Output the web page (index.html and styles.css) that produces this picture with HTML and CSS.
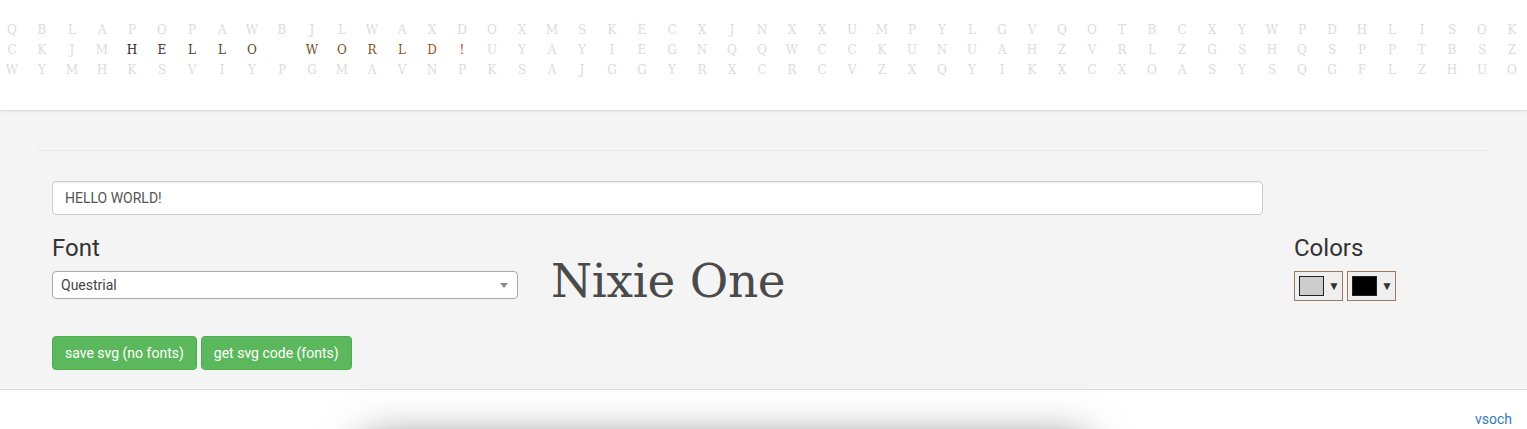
FILE: index.html
```html
<!DOCTYPE html>
<html lang="en">
<head>
<meta charset="utf-8">
<title>Nixie One</title>
<link rel="stylesheet" href="styles.css">
</head>
<body>
<header class="banner">
  <div class="grid-letters">
    <div class="lrow"><span>Q</span><span>B</span><span>L</span><span>A</span><span>P</span><span>O</span><span>P</span><span>A</span><span>W</span><span>B</span><span>J</span><span>L</span><span>W</span><span>A</span><span>X</span><span>D</span><span>O</span><span>X</span><span>M</span><span>S</span><span>K</span><span>E</span><span>C</span><span>X</span><span>J</span><span>N</span><span>X</span><span>X</span><span>U</span><span>M</span><span>P</span><span>Y</span><span>L</span><span>G</span><span>V</span><span>Q</span><span>O</span><span>T</span><span>B</span><span>C</span><span>X</span><span>Y</span><span>W</span><span>P</span><span>D</span><span>H</span><span>L</span><span>I</span><span>S</span><span>O</span><span>K</span></div>
    <div class="lrow"><span>C</span><span>K</span><span>J</span><span>M</span><span class="h1c">H</span><span class="h2c">E</span><span class="h3c">L</span><span class="h4c">L</span><span class="h5c">O</span><span></span><span class="h6c">W</span><span class="h7c">O</span><span class="h8c">R</span><span class="h9c">L</span><span class="h10c">D</span><span class="h11c">!</span><span>U</span><span>Y</span><span>A</span><span>Y</span><span>I</span><span>E</span><span>G</span><span>N</span><span>Q</span><span>Q</span><span>W</span><span>C</span><span>C</span><span>K</span><span>U</span><span>N</span><span>U</span><span>A</span><span>H</span><span>Z</span><span>V</span><span>R</span><span>L</span><span>Z</span><span>G</span><span>S</span><span>H</span><span>Q</span><span>S</span><span>P</span><span>P</span><span>T</span><span>B</span><span>S</span><span>Z</span></div>
    <div class="lrow"><span>W</span><span>Y</span><span>M</span><span>H</span><span>K</span><span>S</span><span>V</span><span>I</span><span>Y</span><span>P</span><span>G</span><span>M</span><span>A</span><span>V</span><span>N</span><span>P</span><span>K</span><span>S</span><span>A</span><span>J</span><span>G</span><span>G</span><span>Y</span><span>R</span><span>X</span><span>C</span><span>R</span><span>C</span><span>V</span><span>Z</span><span>X</span><span>Q</span><span>Y</span><span>I</span><span>K</span><span>X</span><span>C</span><span>X</span><span>O</span><span>A</span><span>S</span><span>Y</span><span>S</span><span>Q</span><span>G</span><span>F</span><span>L</span><span>Z</span><span>H</span><span>U</span><span>O</span></div>
  </div>
</header>

<main class="panel">
  <hr class="divider">
  <div class="controls">
    <input class="text-input" type="text" value="HELLO WORLD!">
    <div class="font-area">
      <div class="font-col">
        <h3 class="label">Font</h3>
        <div class="select">
          <span class="select-text">Questrial</span>
          <span class="select-arrow"></span>
        </div>
      </div>
      <div class="preview">Nixie One</div>
    </div>
    <div class="color-area">
      <h3 class="label">Colors</h3>
      <div class="pickers">
        <button class="picker"><span class="swatch swatch-light"></span><span class="caret">▼</span></button>
        <button class="picker"><span class="swatch swatch-dark"></span><span class="caret">▼</span></button>
      </div>
    </div>
    <div class="buttons">
      <button class="btn">save svg (no fonts)</button>
      <button class="btn">get svg code (fonts)</button>
    </div>
  </div>
</main>

<footer class="foot">
  <div class="credit"><a href="#">vsoch</a></div>
  <div class="canvas"></div>
</footer>
</body>
</html>
```
FILE: styles.css
```css
* { box-sizing: border-box; }
html, body { margin: 0; padding: 0; background: #fff; }
body {
  font-family: Roboto, "Liberation Sans", Arial, sans-serif;
  font-size: 14px;
  color: #333;
  overflow: hidden;
}

.banner {
  height: 111px;
  background: #fff;
  border-bottom: 1px solid #dcdcdc;
  box-shadow: 0 1px 2px rgba(0,0,0,0.06);
  padding-top: 20px;
  position: relative;
  z-index: 1;
}
.grid-letters {
  margin-left: -3px;
  font-family: "DejaVu Serif", "Liberation Serif", serif;
  font-size: 12px;
  line-height: 20px;
  color: #dcdcdc;
}
.lrow { display: flex; white-space: nowrap; }
.lrow span { flex: 0 0 30px; width: 30px; text-align: center; height: 20px; }
.h1c { color: #262833; }
.h2c { color: #3a3431; }
.h3c { color: #473c32; }
.h4c { color: #52432f; }
.h5c { color: #5b472c; }
.h6c { color: #6b5125; }
.h7c { color: #765621; }
.h8c { color: #82571f; }
.h9c { color: #90551e; }
.h10c { color: #a0501d; }
.h11c { color: #c8431c; }

.panel {
  background: #f4f4f4;
  border-bottom: 1px solid #dcdcdc;
  padding: 39px 0 19px;
}
.divider {
  margin: 0 37px;
  border: 0;
  border-top: 1px solid #e8e8e8;
  height: 0;
}
.controls {
  margin-top: 30px;
  padding-left: 52px;
  display: grid;
  grid-template-columns: 1211px 1fr;
  column-gap: 31px;
  align-items: start;
  grid-template-areas:
    "input ."
    "font colors"
    "buttons .";
}
.text-input {
  grid-area: input;
  display: block;
  width: 100%;
  height: 34px;
  padding: 6px 12px;
  font-family: Roboto, "Liberation Sans", sans-serif;
  font-size: 14px;
  color: #555;
  background: #fff;
  border: 1px solid #ccc;
  border-radius: 4px;
  box-shadow: inset 0 1px 1px rgba(0,0,0,0.075);
  outline: none;
}
.label {
  margin: 20px 0 10px;
  font-size: 24px;
  font-weight: 400;
  line-height: 26px;
  color: #333;
}
.font-area {
  grid-area: font;
  display: flex;
  align-items: flex-end;
}
.font-col { width: 466px; }
.select {
  height: 28px;
  background: #fff;
  border: 1px solid #aaa;
  border-radius: 4px;
  display: flex;
  align-items: center;
  padding-left: 8px;
  position: relative;
}
.select-text { color: #444; font-size: 14px; line-height: 26px; }
.select-arrow {
  position: absolute;
  right: 9px;
  top: 11px;
  border-style: solid;
  border-width: 5px 4px 0 4px;
  border-color: #888 transparent transparent transparent;
}
.preview {
  margin-left: 33px;
  margin-bottom: -6px;
  font-family: "DejaVu Serif", "Liberation Serif", serif;
  font-size: 47px;
  line-height: 48px;
  color: #4a4a4a;
  letter-spacing: -0.3px;
}
.color-area { grid-area: colors; }
.pickers { display: flex; gap: 4px; }
.picker {
  width: 49px;
  height: 30px;
  padding: 0 0 0 4px;
  margin: 0;
  background: #efefef;
  border: 1px solid #9a7a60;
  display: flex;
  align-items: center;
  gap: 4px;
  cursor: pointer;
}
.swatch {
  width: 25px;
  height: 20px;
  border: 1px solid #222;
}
.swatch-light { background: #cccccc; }
.swatch-dark { background: #000; }
.caret { font-size: 12px; color: #333; line-height: 1; }

.buttons {
  grid-area: buttons;
  margin-top: 35px;
  display: flex;
  gap: 4px;
}
.btn {
  font-family: Roboto, "Liberation Sans", sans-serif;
  font-size: 14px;
  line-height: 20px;
  padding: 6px 12px;
  height: 34px;
  color: #fff;
  background: #5cb85c;
  border: 1px solid #4cae4c;
  border-radius: 4px;
  cursor: pointer;
}

.foot { background: #fff; }
.credit {
  text-align: right;
  padding: 19px 15px 0 0;
  line-height: 20px;
  font-size: 14px;
}
.credit a { color: #337ab7; text-decoration: none; }
.canvas {
  margin: 12px 0 0 364px;
  width: 722px;
  height: 300px;
  background: #fff;
  box-shadow: 0 0 40px rgba(0,0,0,0.55);
}
```
